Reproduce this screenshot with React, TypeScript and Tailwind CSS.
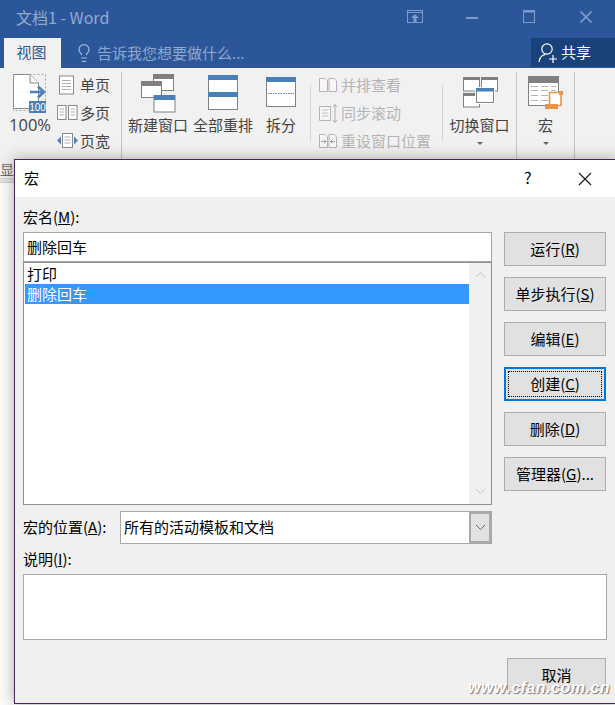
// Word window with the macro dialog open on top of the View ribbon
import { Lightbulb } from 'lucide-react';
import type { ReactNode } from 'react';

const cjk = "font-['Noto_Sans_CJK_SC','Noto_Sans',sans-serif]";

function ZoomIcon() {
  return (
    <svg width="36" height="42" viewBox="12 73 36 42">
      <rect x="13.5" y="74.5" width="32" height="36" fill="none" stroke="#a8a8a8" strokeDasharray="2 2" />
      <path d="M13.5 74.5H30L38.5 83V108.5H13.5Z" fill="#fff" stroke="#8a8a8a" />
      <path d="M30 74.5V83H38.5" fill="#f4f4f4" stroke="#8a8a8a" />
      <path d="M30 92H43M38 86.5L44 92L38 97.5" fill="none" stroke="#4e82b9" strokeWidth="2.6" />
      <rect x="29" y="101" width="17" height="12" fill="#4a80b8" />
      <text x="37.5" y="111" textAnchor="middle" fontSize="10" fill="#fff" fontFamily="Liberation Sans">100</text>
    </svg>
  );
}

function SinglePageIcon() {
  return (
    <svg width="20" height="20" viewBox="0 0 20 20">
      <rect x="2.5" y="1" width="14" height="18" fill="#fff" stroke="#8a8a8a" />
      <path d="M5 5.5H14M5 8.5H14M5 11.5H14M5 14.5H14" stroke="#b0b0b0" />
    </svg>
  );
}

function MultiPageIcon() {
  return (
    <svg width="21" height="16" viewBox="0 0 21 16">
      <rect x="0.5" y="0.5" width="8.5" height="14" fill="#fff" stroke="#8a8a8a" />
      <rect x="11.5" y="0.5" width="8.5" height="14" fill="#fff" stroke="#8a8a8a" />
      <path d="M2.5 4H7M2.5 7H7M2.5 10H7M13.5 4H18M13.5 7H18M13.5 10H18" stroke="#b0b0b0" />
    </svg>
  );
}

function PageWidthIcon() {
  return (
    <svg width="21" height="16" viewBox="0 0 21 16">
      <path d="M0 7.5L4 3.5V11.5Z" fill="#4e82b9" />
      <path d="M21 7.5L17 3.5V11.5Z" fill="#4e82b9" />
      <rect x="5.5" y="0.5" width="10" height="14" fill="#fff" stroke="#8a8a8a" />
      <path d="M7.5 4H13.5M7.5 7H13.5M7.5 10H13.5" stroke="#b0b0b0" />
    </svg>
  );
}

function NewWindowIcon() {
  return (
    <svg width="38" height="41" viewBox="139 73 38 41">
      <rect x="153.5" y="75.5" width="20" height="16" fill="#fff" stroke="#808080" />
      <rect x="153" y="75" width="21" height="5" fill="#808080" />
      <rect x="141.5" y="82.5" width="20" height="16" fill="#fff" stroke="#808080" />
      <rect x="141" y="82" width="21" height="5" fill="#808080" />
      <rect x="154" y="96.5" width="21" height="16.5" fill="#fff" stroke="#808080" />
      <rect x="154" y="96" width="21" height="5" fill="#4a80b8" />
    </svg>
  );
}

function ArrangeAllIcon() {
  return (
    <svg width="32" height="37" viewBox="207 75 32 37">
      <rect x="208.5" y="76.5" width="29" height="34" fill="#fff" stroke="#808080" />
      <rect x="208" y="76" width="30" height="5" fill="#4a80b8" />
      <rect x="208" y="93" width="30" height="5" fill="#4a80b8" />
    </svg>
  );
}

function SplitIcon() {
  return (
    <svg width="32" height="32" viewBox="265 78 32 32">
      <rect x="266.5" y="79.5" width="29" height="29" fill="#fff" stroke="#808080" />
      <rect x="266" y="79" width="30" height="5" fill="#4a80b8" />
      <path d="M268 95.5H294" stroke="#4f79a8" strokeDasharray="1.5 1" />
    </svg>
  );
}

function SwitchWindowIcon() {
  return (
    <svg width="36" height="33" viewBox="460 77 36 33">
      <rect x="461.5" y="78.5" width="16" height="13.5" fill="#fff" stroke="#808080" />
      <rect x="461" y="78" width="17" height="3" fill="#808080" />
      <rect x="479.5" y="78.5" width="16" height="13.5" fill="#fff" stroke="#808080" />
      <rect x="479" y="78" width="17" height="3" fill="#808080" />
      <rect x="461.5" y="94.5" width="16" height="13.5" fill="#fff" stroke="#808080" />
      <rect x="461" y="94" width="17" height="3" fill="#808080" />
      <rect x="473" y="88" width="20" height="17" fill="#fff" />
      <rect x="474.5" y="89.5" width="17" height="14" fill="#fff" stroke="#808080" />
      <rect x="474" y="89" width="18" height="3.5" fill="#4a80b8" />
    </svg>
  );
}

function MacroIcon() {
  return (
    <svg width="38" height="36" viewBox="527 77 38 36">
      <rect x="528.5" y="79.5" width="30" height="29" fill="#fff" stroke="#808080" />
      <rect x="528" y="79" width="31" height="7" fill="#808080" />
      <path d="M531 93.5H538M541 93.5H548M551 93.5H556M531 98.5H538M541 98.5H548M531 103.5H538M541 103.5H548M531 89.5H538M541 89.5H548M551 89.5H556" stroke="#b4b4b4" />
      <path d="M549.5 95.5H561V108.5H549.5Z" fill="#fff" stroke="#e8954a" strokeWidth="1.6" />
      <rect x="559" y="94" width="4" height="4" fill="#e8954a" />
      <rect x="545" y="107" width="13" height="5" fill="#e8954a" />
    </svg>
  );
}

function SideBySideIcon() {
  return (
    <svg width="20" height="16" viewBox="0 0 20 16">
      <path d="M1.5 1.5H7L9.5 4V14.5H1.5ZM11 1.5H16L18.5 4V14.5H11Z" fill="#f8f6f8" stroke="#b8b0b8" />
    </svg>
  );
}

function SyncScrollIcon() {
  return (
    <svg width="20" height="21" viewBox="0 0 20 21">
      <path d="M1.5 3.5H12.5V17.5H1.5Z" fill="#f8f6f8" stroke="#b8b0b8" />
      <path d="M4 7H10.5M4 10H10.5M4 13H10.5" stroke="#c4c0c4" />
      <path d="M17 1.5V19.5M15 4L17 1.5L19 4M15 17L17 19.5L19 17" fill="none" stroke="#b0b0b0" />
    </svg>
  );
}

function ResetPositionIcon() {
  return (
    <svg width="20" height="16" viewBox="0 0 20 16">
      <path d="M1.5 1.5H7L9.5 4V14.5H1.5ZM11 1.5H16L18.5 4V14.5H11Z" fill="#f8f6f8" stroke="#b8b0b8" />
      <path d="M3 8.5H8M6 6.5L8 8.5L6 10.5M12.5 8.5H17M14.5 6.5L12.5 8.5L14.5 10.5" fill="none" stroke="#9a9a9a" />
    </svg>
  );
}

function LargeButton({ icon, label, caret, className }: { icon: ReactNode; label: string; caret?: boolean; className: string }) {
  return (
    <div className={`flex flex-col items-center ${className}`}>
      <div className="h-[48px] flex items-center justify-center">{icon}</div>
      <span className="h-[20px] -mt-[1px] leading-[20px] text-[15px] text-[#444] whitespace-nowrap">{label}</span>
      {caret && <span className="mt-[7px] w-0 h-0 border-x-[3.5px] border-x-transparent border-t-[3.5px] border-t-[#666]" />}
    </div>
  );
}

function SmallButton({ icon, label, disabled, iconWidth }: { icon: ReactNode; label: string; disabled?: boolean; iconWidth: string }) {
  return (
    <div className="h-[28px] flex items-center">
      <div className={`flex justify-center ${iconWidth}`}>{icon}</div>
      <span className={`text-[15px] leading-[20px] whitespace-nowrap ${disabled ? 'text-[#b4b4b4]' : 'text-[#444]'}`}>{label}</span>
    </div>
  );
}

function DialogButton({ label, hotkey, suffix, focused }: { label: string; hotkey: string; suffix?: string; focused?: boolean }) {
  return (
    <button
      className={`h-[34px] w-full flex items-center justify-center bg-[#e1e1e1] text-[15px] text-black whitespace-nowrap ${
        focused ? 'border-2 border-[#0078d7]' : 'border border-[#adadad]'
      }`}
    >
      <span className={focused ? 'w-[94px] h-[26px] border border-dotted border-black flex items-center justify-center' : ''}>
        {label}(<span className="underline">{hotkey}</span>){suffix}
      </span>
    </button>
  );
}

function Chevron({ up, color }: { up?: boolean; color: string }) {
  return (
    <svg width="11" height="7" viewBox="0 0 11 7">
      <path d={up ? 'M1 6L5.5 1.5L10 6' : 'M1 1L5.5 5.5L10 1'} fill="none" stroke={color} strokeWidth="1" />
    </svg>
  );
}

function MacroDialog() {
  return (
    <div className="absolute left-[14px] top-[159px] w-[603px] h-[545px] flex flex-col bg-[#f0f0f0] border border-[#4a2260] shadow-[0_0_14px_rgba(0,0,0,0.32)]">
      <div className="h-[37px] shrink-0 bg-white flex items-center pl-[9px] text-[15px] text-black">
        <span>宏</span>
        <span className="ml-[485px] mb-[3px] text-[16px] leading-none">?</span>
        <svg className="ml-[46px]" width="14" height="14" viewBox="0 0 14 14">
          <path d="M1 1L13 13M13 1L1 13" stroke="#111" strokeWidth="1.1" />
        </svg>
      </div>

      <div className="flex flex-col pl-[8px] text-[15px] text-black">
        <div className="flex">
          <div className="w-[469px] flex flex-col">
            <label className="h-[35px] flex items-center pt-[5px]">
              宏名(<span className="underline">M</span>):
            </label>
            <div className="h-[30px] bg-white border border-[#a5a5a8] flex items-center pl-[3px]">删除回车</div>
            <div className="h-[243px] bg-white border border-[#8f8f95] flex">
              <div className="flex-1 pt-[1px] pl-[1px]">
                <div className="h-[20px] leading-[20px] pl-[2px]">打印</div>
                <div className="h-[20px] leading-[20px] pl-[2px] bg-[#3399ff] text-white">删除回车</div>
              </div>
              <div className="w-[22px] bg-[#f0f0f0] flex flex-col items-center justify-between pt-[8px] pb-[9px]">
                <Chevron up color="#c4c4c4" />
                <Chevron color="#c4c4c4" />
              </div>
            </div>
          </div>
          <div className="w-[102px] ml-[12px] pt-[35px] flex flex-col gap-[11px]">
            <DialogButton label="运行" hotkey="R" />
            <DialogButton label="单步执行" hotkey="S" />
            <DialogButton label="编辑" hotkey="E" />
            <DialogButton label="创建" hotkey="C" focused />
            <DialogButton label="删除" hotkey="D" />
            <DialogButton label="管理器" hotkey="G" suffix="..." />
          </div>
        </div>

        <div className="mt-[6px] flex items-center h-[33px] w-[469px]">
          <label className="w-[97px] whitespace-nowrap">
            宏的位置(<span className="underline">A</span>):
          </label>
          <div className="flex-1 h-full bg-white border border-[#a9a9a9] flex items-center pl-[3px]">
            <span className="flex-1">所有的活动模板和文档</span>
            <div className="w-[22px] h-full bg-[#e1e1e1] border-2 border-[#a9a9a9] flex items-center justify-center">
              <Chevron color="#666" />
            </div>
          </div>
        </div>

        <label className="h-[30px] flex items-center">
          说明(<span className="underline">I</span>):
        </label>
        <div className="h-[66px] w-[584px] bg-white border border-[#a9a9a9]" />
        <div className="mt-[18px] w-[584px] flex justify-end pr-[1px]">
          <button className="w-[99px] h-[34px] bg-[#e1e1e1] border border-[#adadad] text-[15px]">取消</button>
        </div>
      </div>
    </div>
  );
}

export default function App() {
  return (
    <div className={`relative w-[615px] h-[705px] overflow-hidden bg-[#fbfbfb] ${cjk}`}>
      {/* title bar */}
      <div className="h-[38px] bg-[#2b579a] flex items-center pl-[16px] pb-[5px] text-[#93a9cb]">
        <span className="text-[16px]">文档1 - Word</span>
        <div className="ml-auto flex items-center">
          <svg width="16" height="13" viewBox="0 0 16 13" className="mr-[43px]">
            <rect x="0.5" y="0.5" width="15" height="12" fill="none" stroke="#7f9ac4" />
            <path d="M1 2.5H15" stroke="#7f9ac4" />
            <path d="M8 4L12 8H9.5V12H6.5V8H4Z" fill="#7f9ac4" />
          </svg>
          <div className="w-[12px] h-[2px] bg-[#7f9ac4] mr-[45px] mt-[2px]" />
          <svg width="12" height="13" viewBox="0 0 12 13" className="mr-[45px]">
            <rect x="0.5" y="0.5" width="11" height="12" fill="none" stroke="#7f9ac4" />
            <path d="M0 1.5H12" stroke="#7f9ac4" strokeWidth="2" />
          </svg>
          <svg width="12" height="12" viewBox="0 0 12 12" className="mr-[23px]">
            <path d="M0.5 0.5L11.5 11.5M11.5 0.5L0.5 11.5" stroke="#7f9ac4" strokeWidth="1.7" />
          </svg>
        </div>
      </div>

      {/* tabs row */}
      <div className="h-[30px] bg-[#2b579a] flex pl-[4px]">
        <div className="w-[57px] h-full bg-[#f1f1f1] flex items-center justify-center pr-[2px] pb-[1px] text-[15px] text-[#2b579a]">视图</div>
        <div className="ml-[13px] flex items-center text-[15px] text-[#8fa8cd]">
          <Lightbulb size={20} strokeWidth={1.4} color="#a8bcda" className="mr-[3px]" />
          <span>告诉我您想要做什么...</span>
        </div>
        <div className="ml-auto w-[84px] h-[29px] bg-[#19427a] flex items-center pl-[7px] text-[15px] text-white">
          <svg width="20" height="22" viewBox="0 0 20 22" className="mr-[3px]">
            <circle cx="9" cy="7" r="5.2" fill="none" stroke="#fff" strokeWidth="1.2" />
            <path d="M1 20C1.5 15.5 4 13 7.5 12.3M13 11.5" fill="none" stroke="#fff" strokeWidth="1.2" />
            <path d="M15 13V21M11 17H19" stroke="#fff" strokeWidth="1.2" />
          </svg>
          共享
        </div>
      </div>

      {/* ribbon */}
      <div className="h-[92px] bg-[#f1f1f1] flex">
        <div className="w-[122px] flex border-r border-[#c6c6c6] mt-[4px] pl-[9px]">
          <div className="w-[42px] flex flex-col items-center">
            <div className="h-[44px] pt-[1px]">
              <ZoomIcon />
            </div>
            <span className="-mt-[1px] text-[16.5px] leading-[20px] text-[#444] whitespace-nowrap font-['Open_Sans',sans-serif]">100%</span>
          </div>
          <div className="ml-[5px] -mt-[1px] flex flex-col">
            <SmallButton iconWidth="w-[22px] mr-[2px]" icon={<SinglePageIcon />} label="单页" />
            <SmallButton iconWidth="w-[22px] mr-[2px]" icon={<MultiPageIcon />} label="多页" />
            <SmallButton iconWidth="w-[22px] mr-[2px]" icon={<PageWidthIcon />} label="页宽" />
          </div>
        </div>

        <div className="flex">
          <LargeButton className="w-[72px]" icon={<NewWindowIcon />} label="新建窗口" />
          <LargeButton className="w-[58px]" icon={<ArrangeAllIcon />} label="全部重排" />
          <LargeButton className="w-[58px]" icon={<SplitIcon />} label="拆分" />
        </div>

        <div className="self-start mt-[17px] h-[56px] w-px bg-[#d4d4d4]" />
        <div className="w-[131px] pl-[7px] pt-[3px] flex flex-col">
          <SmallButton disabled iconWidth="w-[20px] mr-[3px]" icon={<SideBySideIcon />} label="并排查看" />
          <SmallButton disabled iconWidth="w-[20px] mr-[3px]" icon={<SyncScrollIcon />} label="同步滚动" />
          <SmallButton disabled iconWidth="w-[20px] mr-[3px]" icon={<ResetPositionIcon />} label="重设窗口位置" />
        </div>
        <div className="self-start mt-[17px] h-[56px] w-px bg-[#d4d4d4]" />

        <LargeButton className="w-[73px]" icon={<SwitchWindowIcon />} label="切换窗口" caret />
        <div className="self-end h-[88px] w-px bg-[#c6c6c6]" />
        <LargeButton className="w-[57px]" icon={<MacroIcon />} label="宏" caret />
        <div className="self-end h-[88px] w-px bg-[#c6c6c6]" />
      </div>

      {/* group label row behind the dialog */}
      <div className="h-[18px] bg-[#f1f1f1] text-[14px] leading-[18px] text-[#666] overflow-hidden whitespace-nowrap">显</div>
      <div className="h-[5px] bg-[#e2e2e2] border-y border-[#d0d0d0]" />

      <MacroDialog />

      {/* site watermark */}
      <span className="absolute right-[5px] bottom-[9px] text-[16px] leading-none font-bold italic tracking-[0.5px] text-white font-['Liberation_Sans',sans-serif] [text-shadow:1px_1px_1px_#777]">
        www.cfan.com.cn
      </span>
    </div>
  );
}
